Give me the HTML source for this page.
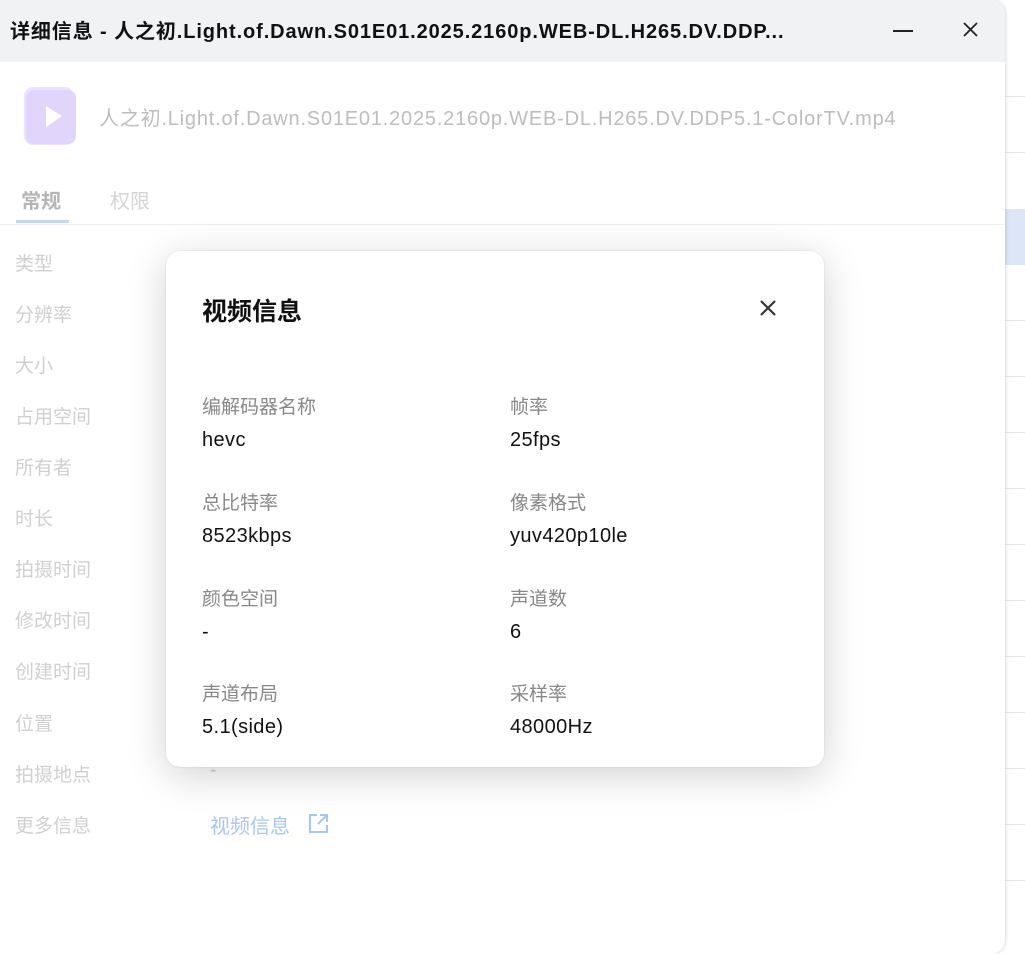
<!DOCTYPE html>
<html><head><meta charset="utf-8"><style>
*{margin:0;padding:0;box-sizing:border-box}
body{width:1025px;height:954px;background:#fff;font-family:"Liberation Sans","Noto Sans CJK SC",sans-serif;position:relative;overflow:hidden}
.strip{position:absolute;left:1005px;top:0;width:20px;height:954px;background:#fff}
.strip i{position:absolute;left:0;width:20px;height:1px;background:#e6e6e6}
.win{position:absolute;left:0;top:0;width:1005px;height:954px;background:#fff;border-radius:0 14px 14px 0;box-shadow:1px 0 3px rgba(0,0,0,.15);overflow:hidden}
.tb{height:62px;background:#f1f2f4;position:relative}
.tb .t{position:absolute;left:10px;top:15px;font-size:20px;letter-spacing:.9px;font-weight:bold;color:#111;white-space:nowrap}
.abs{position:absolute;white-space:nowrap}
.lbl{position:absolute;left:15px;font-size:19px;color:#d0d0d0}
.modal{position:absolute;left:166px;top:251px;width:658px;height:516px;background:#fff;border-radius:14px;box-shadow:0 8px 40px rgba(0,0,0,.18),0 0 2px rgba(0,0,0,.1)}
.k{position:absolute;font-size:19px;color:#888}
.v{position:absolute;font-size:20px;letter-spacing:.4px;color:#111}
</style></head><body>
<div class="strip"><i style="top:96px"></i><i style="top:152px"></i><div style="position:absolute;top:209px;left:0;width:20px;height:56px;background:#dde6f6"></div><i style="top:320px"></i><i style="top:376px"></i><i style="top:432px"></i><i style="top:488px"></i><i style="top:544px"></i><i style="top:600px"></i><i style="top:656px"></i><i style="top:712px"></i><i style="top:768px"></i><i style="top:824px"></i><i style="top:880px"></i></div>
<div class="win">
<div class="tb"><div class="t">详细信息 - 人之初.Light.of.Dawn.S01E01.2025.2160p.WEB-DL.H265.DV.DDP...</div>
<div class="abs" style="left:893px;top:30px;width:20px;height:2px;background:#222"></div>
<svg class="abs" style="left:962px;top:21px" width="17" height="17" viewBox="0 0 17 17"><path d="M2 2L15 15M15 2L2 15" stroke="#222" stroke-width="1.8"/></svg>
</div>
<svg class="abs" style="left:24px;top:87px" width="54" height="58" viewBox="0 0 54 58"><rect x="0" y="0" width="50" height="58" rx="9" fill="#ece2fd"/><rect x="2" y="3" width="50" height="54" rx="8" fill="#e2d5fb"/><path d="M22 19L38 29L22 40Z" fill="#fff"/></svg>
<div class="abs" style="left:99px;top:102px;font-size:20px;letter-spacing:.8px;color:#bdbdbd">人之初.Light.of.Dawn.S01E01.2025.2160p.WEB-DL.H265.DV.DDP5.1-ColorTV.mp4</div>
<div class="abs" style="left:21px;top:185px;font-size:20px;font-weight:bold;color:#b5b5b5">常规</div>
<div class="abs" style="left:110px;top:185px;font-size:20px;color:#d5d5d5">权限</div>
<div class="abs" style="left:16px;top:220px;width:53px;height:3px;background:#c3d6f6"></div>
<div class="abs" style="left:0;top:224px;width:1005px;height:1px;background:#eee"></div>
<div class="lbl" style="top:249px">类型</div>
<div class="lbl" style="top:300px">分辨率</div>
<div class="lbl" style="top:351px">大小</div>
<div class="lbl" style="top:402px">占用空间</div>
<div class="lbl" style="top:453px">所有者</div>
<div class="lbl" style="top:504px">时长</div>
<div class="lbl" style="top:555px">拍摄时间</div>
<div class="lbl" style="top:606px">修改时间</div>
<div class="lbl" style="top:657px">创建时间</div>
<div class="lbl" style="top:709px">位置</div>
<div class="lbl" style="top:760px">拍摄地点</div>
<div class="lbl" style="top:811px">更多信息</div>
<div class="abs" style="left:210px;top:760px;font-size:19px;color:#ccc">-</div>
<div class="abs" style="left:210px;top:810px;font-size:20px;color:#a8c6f4">视频信息</div>
<svg class="abs" style="left:308px;top:813px" width="21" height="21" viewBox="0 0 21 21"><path d="M9 2H2V19H19V12M12 2H19V9M19 2L10 11" fill="none" stroke="#a8c6f4" stroke-width="2"/></svg>
</div>
<div class="modal">
<div class="abs" style="left:36px;top:41px;font-size:25px;font-weight:bold;color:#111">视频信息</div>
<svg class="abs" style="left:594px;top:49px" width="16" height="16" viewBox="0 0 16 16"><path d="M1 1L15 15M15 1L1 15" stroke="#333" stroke-width="2.2"/></svg>
<div class="k" style="left:36px;top:141px">编解码器名称</div><div class="v" style="left:36px;top:178px">hevc</div>
<div class="k" style="left:344px;top:141px">帧率</div><div class="v" style="left:344px;top:178px">25fps</div>
<div class="k" style="left:36px;top:237px">总比特率</div><div class="v" style="left:36px;top:274px">8523kbps</div>
<div class="k" style="left:344px;top:237px">像素格式</div><div class="v" style="left:344px;top:274px">yuv420p10le</div>
<div class="k" style="left:36px;top:333px">颜色空间</div><div class="v" style="left:36px;top:370px">-</div>
<div class="k" style="left:344px;top:333px">声道数</div><div class="v" style="left:344px;top:370px">6</div>
<div class="k" style="left:36px;top:428px">声道布局</div><div class="v" style="left:36px;top:465px">5.1(side)</div>
<div class="k" style="left:344px;top:428px">采样率</div><div class="v" style="left:344px;top:465px">48000Hz</div>
</div>
</body></html>
